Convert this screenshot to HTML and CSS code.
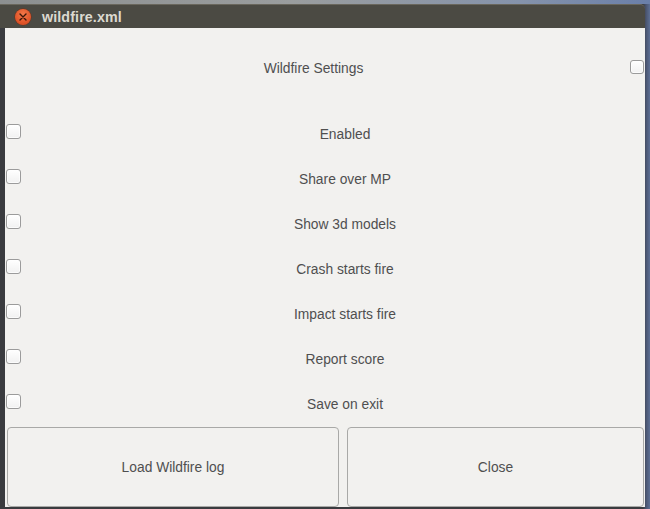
FILE: index.html
```html
<!DOCTYPE html>
<html>
<head>
<meta charset="utf-8">
<link rel="stylesheet" href="styles.css">
</head>
<body>
<div class="screen">
  <div class="sky"></div>
  <div class="window">
    <div class="titlebar">
      <span class="close-btn">
        <svg width="8" height="8" viewBox="0 0 8 8"><path d="M1 1L7 7M7 1L1 7" stroke="#3b1609" stroke-width="1.4" stroke-linecap="round"/></svg>
      </span>
      <span class="title">wildfire.xml</span>
    </div>
    <div class="content">
      <div class="header">
        <span class="header-label">Wildfire Settings</span>
        <span class="check"></span>
      </div>
      <div class="row"><span class="check"></span><span class="label">Enabled</span></div>
      <div class="row"><span class="check"></span><span class="label">Share over MP</span></div>
      <div class="row"><span class="check"></span><span class="label">Show 3d models</span></div>
      <div class="row"><span class="check"></span><span class="label">Crash starts fire</span></div>
      <div class="row"><span class="check"></span><span class="label">Impact starts fire</span></div>
      <div class="row"><span class="check"></span><span class="label">Report score</span></div>
      <div class="row"><span class="check"></span><span class="label">Save on exit</span></div>
      <div class="buttons">
        <button class="btn btn-load">Load Wildfire log</button>
        <button class="btn btn-close">Close</button>
      </div>
    </div>
  </div>
</div>
</body>
</html>
```
FILE: styles.css
```css
html, body {
  margin: 0;
  padding: 0;
}
body {
  background: #3b3c40;
  font-family: "Liberation Sans", Arial, sans-serif;
}
.screen {
  width: 650px;
  height: 509px;
  display: flex;
  flex-direction: column;
  background: linear-gradient(90deg, #3a3b3f 0, #3a3b3f 643px, #4a5570 646px, #5d6f95 650px);
  overflow: hidden;
}
.sky {
  height: 4px;
  flex: none;
  background: linear-gradient(90deg, #8c8f90 0%, #9a9d9e 45%, #8593ab 80%, #6a7fa9 100%);
}
.window {
  flex: 1;
  display: flex;
  flex-direction: column;
  margin-right: 5px;
}
.titlebar {
  height: 23px;
  flex: none;
  background: #4b4a43;
  border-top: 1px solid #6a675d;
  border-top-right-radius: 5px;
  display: flex;
  align-items: center;
  padding-left: 15px;
}
.close-btn {
  width: 16px;
  height: 16px;
  border-radius: 50%;
  background: radial-gradient(circle at 50% 35%, #f47a4a 0%, #e2562a 60%, #c9441c 100%);
  box-shadow: 0 0 0 0.5px #7a2a10;
  display: flex;
  align-items: center;
  justify-content: center;
}
.close-btn svg {
  display: block;
}
.title {
  color: #dcd9d0;
  font-weight: bold;
  font-size: 14.3px;
  margin-left: 11px;
  margin-top: 1px;
  letter-spacing: 0.1px;
}
.content {
  margin-left: 5px;
  height: 479px;
  flex: none;
  background: #f2f1ef;
  display: flex;
  flex-direction: column;
  color: #4f4f4f;
  font-size: 13.8px;
}
.header {
  height: 82px;
  flex: none;
  display: flex;
  align-items: center;
  padding-bottom: 1px;
  box-sizing: border-box;
}
.header-label {
  flex: 1;
  text-align: center;
  padding-right: 8px;
}
.header .check {
  width: 12px;
  height: 12px;
  margin-right: 1px;
  margin-top: -4px;
}
.row {
  height: 45px;
  flex: none;
  display: flex;
  align-items: center;
}
.check {
  width: 13px;
  height: 13px;
  border: 1px solid #9b9b9b;
  border-radius: 3px;
  background: linear-gradient(#ffffff, #f1f1f1);
  box-shadow: inset 0 0 0 1px rgba(255,255,255,0.7);
  flex: none;
}
.row .check {
  margin-left: 1px;
  margin-top: -3px;
}
.label {
  flex: 1;
  text-align: center;
  padding-left: 24px;
  padding-top: 3px;
}
.buttons {
  display: flex;
  gap: 8px;
  padding: 2px 1px 0 2px;
  height: 80px;
  flex: none;
}
.btn {
  height: 80px;
  margin: 0;
  border: 1px solid #a9a9a7;
  border-radius: 4px;
  background: #f2f1ef;
  color: #4f4f4f;
  font-family: "Liberation Sans", Arial, sans-serif;
  font-size: 13.8px;
  padding: 0;
}
.btn-load {
  width: 332px;
}
.btn-close {
  flex: 1;
}
```
